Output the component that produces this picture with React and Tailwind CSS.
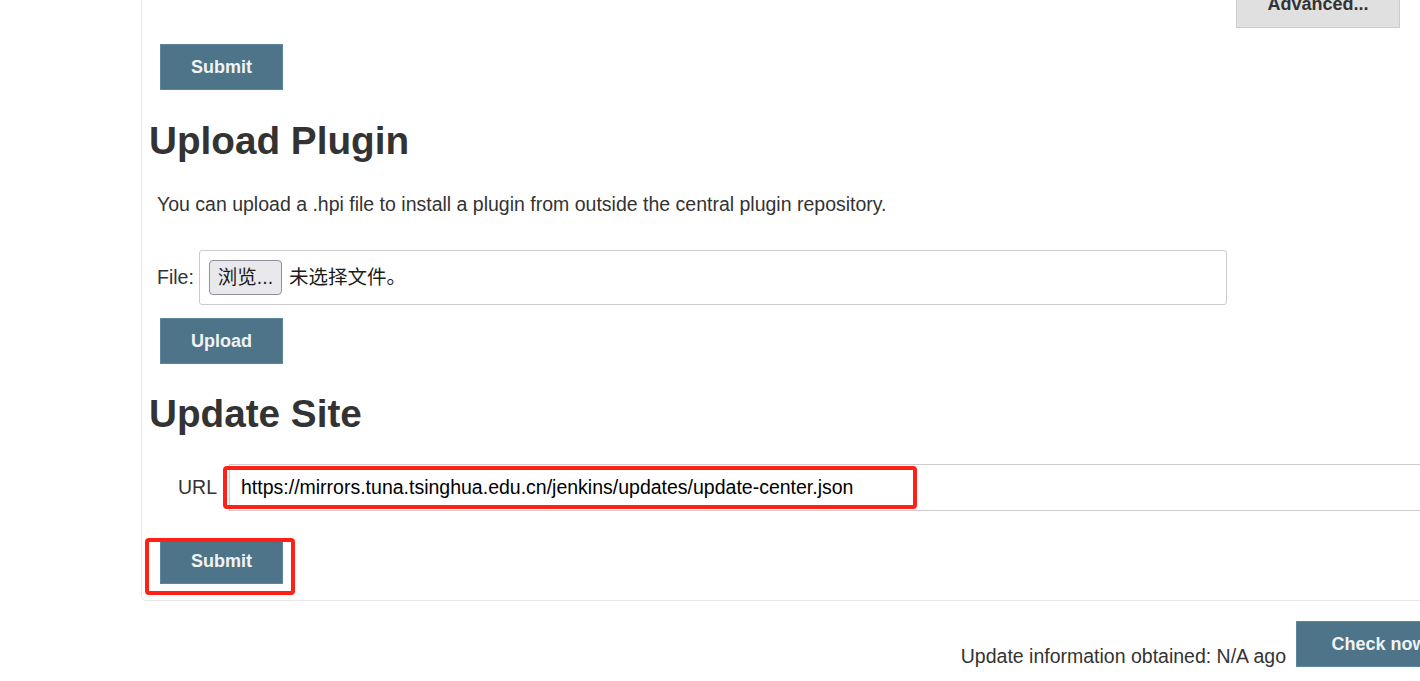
import React from 'react';

const font = { fontFamily: '"Liberation Sans", Arial, "Noto Sans CJK SC", sans-serif' };

const BlueButton = ({ children, className = '' }) => (
    <button className={`h-[46px] bg-[#4d7489] border border-[#5a86a0] text-[#f2f2f2] font-bold text-[18px] ${className}`}>
        {children}
    </button>
);

export default function App() {
    return (
        <div className="relative w-[1420px] h-[681px] overflow-hidden bg-white text-[#333]" style={font}>
            {/* main panel */}
            <div className="ml-[141px] h-[601px] border-l border-b border-[#e8e8e8] rounded-bl-[5px] flex flex-col">
                {/* advanced row */}
                <div className="h-[28px] flex justify-end pr-[20px]">
                    <button className="-mt-[19px] w-[164px] h-[47px] bg-[#e0e0e0] border border-[#cccccc] text-[#333] font-bold text-[18px]">
                        Advanced...
                    </button>
                </div>

                <BlueButton className="mt-[16px] ml-[18px] w-[123px]">Submit</BlueButton>

                <h1 className="mt-[29px] ml-[7px] text-[38.7px] leading-[44px] font-bold">Upload Plugin</h1>

                <p className="mt-[28px] ml-[15px] text-[19.5px] leading-[26px]">
                    You can upload a .hpi file to install a plugin from outside the central plugin repository.
                </p>

                <div className="mt-[33px] ml-[15px] flex items-center">
                    <span className="text-[19.5px] mr-[5px]">File:</span>
                    <div className="w-[1028px] h-[55px] border border-[#cccccc] rounded-[3px] flex items-center pl-[9px]">
                        <span className="h-[35px] px-[8px] flex items-center bg-[#e9e9ed] border border-[#8f8f9d] rounded-[4px] text-[19.5px] text-[#1b1b1b]">
                            浏览...
                        </span>
                        <span className="ml-[7px] text-[19.5px] text-[#1b1b1b]">未选择文件。</span>
                    </div>
                </div>

                <BlueButton className="mt-[13px] ml-[18px] w-[123px]">Upload</BlueButton>

                <h1 className="mt-[28px] ml-[7px] text-[38.7px] leading-[44px] font-bold">Update Site</h1>

                <div className="mt-[28px] ml-[36px] flex items-center">
                    <span className="text-[19.5px] mr-[12px]">URL</span>
                    <div className="relative flex-1 h-[47px] border-t border-b border-l border-[#cccccc] flex items-center pl-[11px]">
                        <span className="text-[19.5px] text-black">https://mirrors.tuna.tsinghua.edu.cn/jenkins/updates/update-center.json</span>
                        <div className="absolute left-[-7px] top-[1px] w-[694px] h-[43px] border-[4px] border-[#ff2115] rounded-[4px]" />
                    </div>
                </div>

                <div className="relative mt-[27px] ml-[18px] w-[123px]">
                    <BlueButton className="w-[123px]">Submit</BlueButton>
                    <div className="absolute left-[-15px] top-[0px] w-[150px] h-[57px] border-[4px] border-[#ff2115] rounded-[4px]" />
                </div>
            </div>

            {/* update info */}
            <div className="flex justify-end items-end mt-[20px] -mr-[40px]">
                <span className="text-[19.5px] leading-[22px] mr-[10px]">Update information obtained: N/A ago</span>
                <BlueButton className="w-[164px] text-[18.5px] pl-[2px]">Check now</BlueButton>
            </div>
        </div>
    );
}
